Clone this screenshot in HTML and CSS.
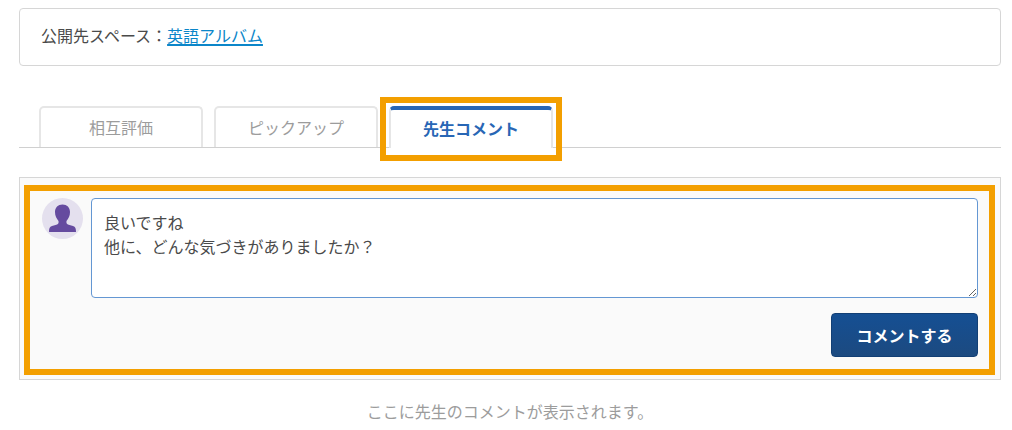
FILE: index.html
```html
<!DOCTYPE html>
<html lang="ja">

<head>
    <meta charset="UTF-8">
    <meta name="viewport" content="width=device-width, initial-scale=1.0">
    <title>先生コメント</title>
    <link rel="stylesheet" href="styles.css">
</head>

<body>
    <!-- Shared space -->
    <div class="space-box">
        公開先スペース：<a href="#">英語アルバム</a>
    </div>

    <!-- Tabs -->
    <nav class="tabs">
        <button type="button" class="tab">相互評価</button>
        <button type="button" class="tab">ピックアップ</button>
        <button type="button" class="tab active">先生コメント</button>
    </nav>

    <!-- Comment form -->
    <main>
        <div class="comment-panel">
            <form class="comment-form">
                <div class="comment-row">
                    <svg class="avatar" viewBox="0 0 82 82" aria-hidden="true">
                        <circle cx="41" cy="41" r="41" fill="#e4e0ee" />
                        <path d="M41 13C32 13 26 19 26 28C26 36 29 41 33 46C34 51 32 53 27 54L20 56C15 58 14 61 14 68H68C68 61 67 58 62 56L55 54C50 53 48 51 49 46C53 41 56 36 56 28C56 19 50 13 41 13Z" fill="#654b9f" />
                    </svg>
                    <textarea class="comment-input" name="comment" aria-label="コメント">良いですね
他に、どんな気づきがありましたか？</textarea>
                </div>
                <button type="submit" class="submit-button">コメントする</button>
            </form>
        </div>
        <p class="empty-message">ここに先生のコメントが表示されます。</p>
    </main>
</body>

</html>
```
FILE: styles.css
```css
* {
    margin: 0;
    padding: 0;
    box-sizing: border-box;
}

body {
    font-family: "Noto Sans CJK JP", sans-serif;
    font-size: 16px;
    line-height: 24px;
    color: #4a4a4a;
    background-color: #fff;
    padding: 8px 11px 0 19px;
}

button,
textarea {
    font: inherit;
}

.space-box {
    padding: 14px 21px 18px;
    border: 1px solid #d6d6d6;
    border-radius: 4px;
}

.space-box a {
    color: #0b86c9;
    text-decoration-thickness: 2px;
    text-underline-offset: 2px;
}

.tabs {
    display: flex;
    gap: 11px;
    margin-top: 40px;
    padding: 0 20px;
    border-bottom: 1px solid #d0d0d0;
}

.tab {
    position: relative;
    width: 164px;
    height: 41px;
    padding-bottom: 2px;
    color: #9c9c9c;
    background-color: #fff;
    border: 2px solid #e6e6e6;
    border-bottom: none;
    border-radius: 5px 5px 0 0;
    cursor: pointer;
}

.tab.active {
    height: 42px;
    margin-bottom: -1px;
    color: #2866b5;
    font-weight: bold;
    border-top: 4px solid #2866b5;
}

/* Highlight frame around the current tab */
.tab.active::after {
    content: "";
    position: absolute;
    top: -13px;
    right: -11px;
    bottom: -13px;
    left: -11px;
    border: 6px solid #f39f00;
}

.comment-panel {
    margin-top: 29px;
    padding: 7px 5px 4px 4px;
    background-color: #fafafa;
    border: 1px solid #d6d6d6;
}

.comment-form {
    padding: 7px 11px 12px 12px;
    border: 6px solid #f39f00;
}

.comment-row {
    display: flex;
    gap: 8px;
}

.avatar {
    flex: none;
    width: 41px;
    height: 41px;
}

.comment-input {
    flex: 1;
    min-width: 0;
    height: 100px;
    padding: 11px 12px;
    color: #4a4a4a;
    background-color: #fff;
    border: 1px solid #6497d3;
    border-radius: 4px;
    resize: vertical;
}

.submit-button {
    display: block;
    width: 147px;
    height: 44px;
    margin: 15px 0 0 auto;
    color: #fff;
    font-weight: bold;
    background: linear-gradient(to bottom, #154f93, #1c4a80);
    border: 1px solid #123f75;
    border-radius: 4px;
    cursor: pointer;
}

.empty-message {
    margin-top: 19px;
    color: #9c9c9c;
    text-align: center;
}
```
